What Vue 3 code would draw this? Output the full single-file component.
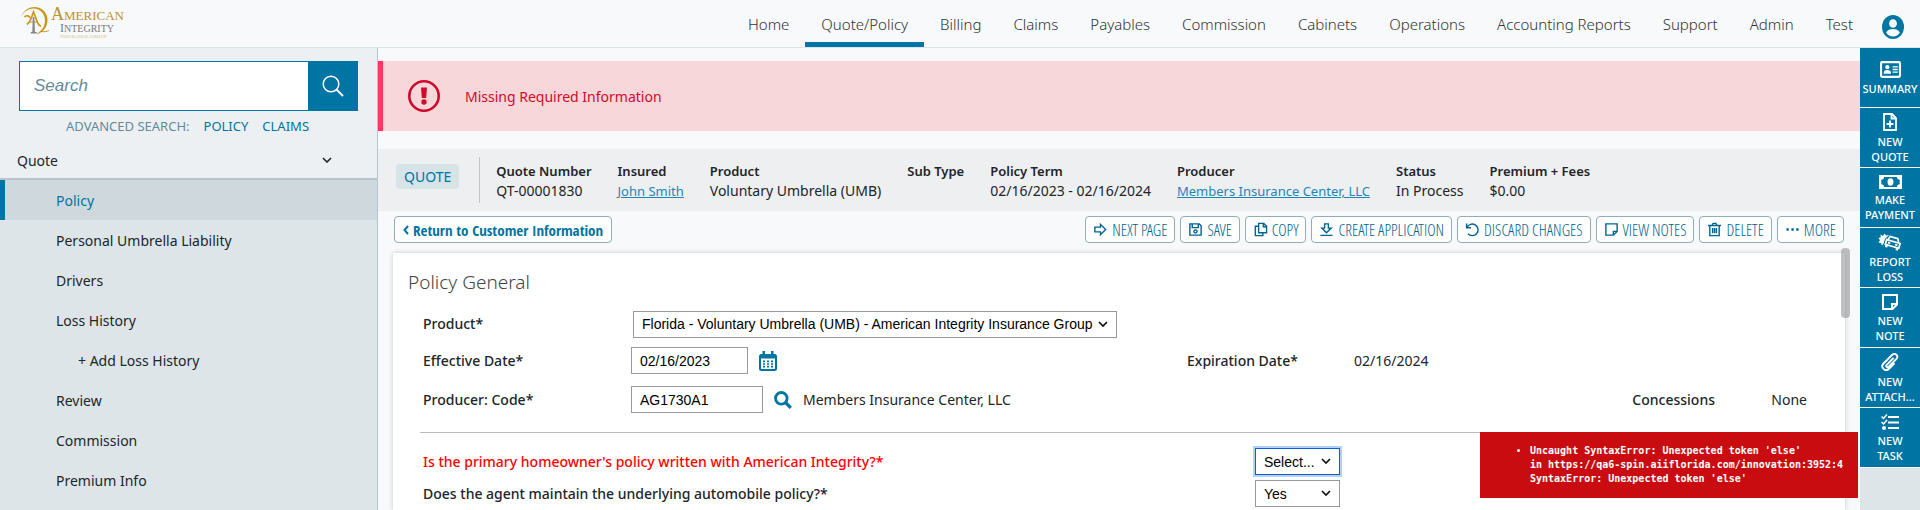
<script setup>
import { ref } from 'vue'

const navItems = ['Home', 'Quote/Policy', 'Billing', 'Claims', 'Payables', 'Commission', 'Cabinets', 'Operations', 'Accounting Reports', 'Support', 'Admin', 'Test']
const activeNav = 'Quote/Policy'

const sideItems = [
  { label: 'Policy', active: true },
  { label: 'Personal Umbrella Liability' },
  { label: 'Drivers' },
  { label: 'Loss History' },
  { label: '+ Add Loss History', nested: true },
  { label: 'Review' },
  { label: 'Commission' },
  { label: 'Premium Info' },
]

const facts = [
  { name: 'Quote Number', value: 'QT-00001830' },
  { name: 'Insured', value: 'John Smith', link: true },
  { name: 'Product', value: 'Voluntary Umbrella (UMB)' },
  { name: 'Sub Type', value: '' },
  { name: 'Policy Term', value: '02/16/2023 - 02/16/2024' },
  { name: 'Producer', value: 'Members Insurance Center, LLC', link: true },
  { name: 'Status', value: 'In Process' },
  { name: 'Premium + Fees', value: '$0.00' },
]

const actions = [
  { label: 'NEXT PAGE', icon: 'M2 5.500h6v-3l5.500 5.500-5.500 5.500v-3H2z' },
  { label: 'SAVE', icon: 'M2 2h10l2 2v10H2zM4.500 2v4h6.500V2M8 8.400a1.700 1.700 0 1 0 .01 0z' },
  { label: 'COPY', icon: 'M6 1.500h5.500l3 3v7H6zM11 1.500v3.500h3.500M6 4.500H2.500v10h8v-3' },
  { label: 'CREATE APPLICATION', icon: 'M6 2h4v4.500h3L8 11.500 3 6.500h3zM1.500 14.300h13' },
  { label: 'DISCARD CHANGES', icon: 'M1.700 1.500v4.700h4.700M2 6a6.200 6.200 0 1 1 1.200 6.600' },
  { label: 'VIEW NOTES', icon: 'M2 2h12v8l-4 4H2zM14 10h-4v4' },
  { label: 'DELETE', icon: 'M1 3.700h14M5.500 3.500l1-2h3l1 2M3 4v10.500h10V4M6 6.500v5.500M8 6.500v5.500M10 6.500v5.500' },
  { label: 'MORE', icon: 'M1.500 8h2.500M6.800 8h2.500M12 8h2.500', dots: true },
]

const tools = [
  { lines: ['SUMMARY'], icon: 'card' },
  { lines: ['NEW', 'QUOTE'], icon: 'file' },
  { lines: ['MAKE', 'PAYMENT'], icon: 'money' },
  { lines: ['REPORT', 'LOSS'], icon: 'car' },
  { lines: ['NEW', 'NOTE'], icon: 'note' },
  { lines: ['NEW', 'ATTACH...'], icon: 'clip' },
  { lines: ['NEW', 'TASK'], icon: 'task' },
]

const search = ref('')
const effectiveDate = ref('02/16/2023')
const producerCode = ref('AG1730A1')
</script>

<template>
  <div class="app">
    <header class="top">
      <a class="logo" href="#" aria-label="American Integrity Insurance Group">
        <svg class="emblem" width="30" height="30" viewBox="0 0 30 30" fill="none">
          <path d="M.8 12C2.500 5.500 8 1 14.500 1 22 1 28 7 27.500 15c-.5 7-5 12-11.500 13.300C21.500 25 25 20.500 25 14.500 25 7.500 20 2.500 13.500 2.500 8 2.500 3 6 .8 12z" fill="#c9971c" />
          <path d="M4.500 11c2.500-2 4.500-1.500 5.500 1M7 18.500c2-1.500 3.500-4 4.500-7L13.500 6l4.500 11.500c1 2 2 2.500 3 2.800" stroke="#c9971c" stroke-width="1.700" />
          <path d="M9 16h8M21 25.500c3 .4 5.500.2 8-1" stroke="#c9971c" />
          <path d="M12.800 11h1.600l.5 15h1.800v1.600h-6V26h1.600z" fill="#85868d" />
        </svg>
        <span class="brand">
          <span class="brand-a"><b>A</b>MERICAN</span>
          <span class="brand-b"><b>I</b>NTEGRITY</span>
          <span class="brand-c">INSURANCE GROUP</span>
        </span>
      </a>
      <nav class="nav">
        <a v-for="n in navItems" :key="n" href="#" :class="{ on: n === activeNav }">{{ n }}</a>
      </nav>
      <button class="user" aria-label="User account">
        <svg width="22" height="24" viewBox="0 0 24 24" preserveAspectRatio="none">
          <circle cx="12" cy="12" r="12" fill="#0074a2" />
          <circle cx="12" cy="8.500" r="4.300" fill="#f7f9fa" />
          <path d="M4.500 17.500c1.500-2.500 4-3.500 7.500-3.500s6 1 7.500 3.500c-1.500 2.500-4.300 4-7.500 4s-6-1.500-7.500-4z" fill="#f7f9fa" />
        </svg>
      </button>
    </header>

    <div class="body">
      <aside class="side">
        <form class="search" @submit.prevent>
          <input v-model="search" type="text" placeholder="Search" aria-label="Search" />
          <button aria-label="Run search">
            <svg width="22" height="22" viewBox="0 0 22 22" fill="none" stroke="#fff" stroke-width="1.500">
              <circle cx="9" cy="9" r="7.800" /><path d="M14.500 14.500l6.500 6.500" stroke-width="2" />
            </svg>
          </button>
        </form>
        <div class="advanced">
          <span>ADVANCED SEARCH:</span><a href="#">POLICY</a><a href="#">CLAIMS</a>
        </div>
        <button class="group">
          Quote
          <svg width="10" height="6" viewBox="0 0 10 6" fill="none" stroke="#222" stroke-width="1.600"><path d="M1 1l4 4 4-4" /></svg>
        </button>
        <nav class="tree">
          <a v-for="s in sideItems" :key="s.label" href="#" :class="{ on: s.active, nested: s.nested }">{{ s.label }}</a>
        </nav>
      </aside>

      <main class="main">
        <div class="alert" role="alert">
          <svg width="32" height="32" viewBox="0 0 32 32">
            <circle cx="16" cy="16" r="14.700" fill="none" stroke="#cf0a2c" stroke-width="2.600" />
            <path d="M13 7.500h6l-.8 10.500h-4.400z" fill="#cf0a2c" /><circle cx="16" cy="22" r="2.700" fill="#cf0a2c" />
          </svg>
          <span>Missing Required Information</span>
        </div>

        <section class="facts">
          <span class="badge">QUOTE</span>
          <dl>
            <div v-for="f in facts" :key="f.name">
              <dt>{{ f.name }}</dt>
              <dd><a v-if="f.link" href="#">{{ f.value }}</a><template v-else>{{ f.value }}</template></dd>
            </div>
          </dl>
        </section>

        <div class="toolbar">
          <button class="btn back">
            <svg width="6" height="10" viewBox="0 0 6 10" fill="none" stroke="currentColor" stroke-width="2"><path d="M5 1L1.500 5 5 9" /></svg>
            Return to Customer Information
          </button>
          <div class="actions">
            <button v-for="a in actions" :key="a.label" class="btn">
              <svg width="15" height="15" viewBox="0 0 16 16" fill="none" stroke="currentColor" :stroke-width="a.dots ? 2.500 : 1.500"><path :d="a.icon" /></svg>
              {{ a.label }}
            </button>
          </div>
        </div>

        <section class="card">
          <h1>Policy General</h1>
          <div class="row">
            <label for="product">Product*</label>
            <span class="select wide">
              <select id="product"><option>Florida - Voluntary Umbrella (UMB) - American Integrity Insurance Group</option></select>
              <svg width="10" height="7" viewBox="0 0 10 7" fill="none" stroke="#111" stroke-width="1.700"><path d="M1 1l4 4 4-4" /></svg>
            </span>
          </div>
          <div class="row dates">
            <label for="effective">Effective Date*</label>
            <div class="field">
              <input id="effective" v-model="effectiveDate" class="date" type="text" />
              <button class="icon" aria-label="Pick date">
                <svg width="18" height="20" viewBox="0 0 18 20" fill="none">
                  <rect x="1" y="4" width="16" height="15" rx="1.500" stroke="#0074a2" stroke-width="2" />
                  <path d="M1 3.500h16v4H1zM3.500 0h2.500v4H3.500zM12 0h2.500v4H12z" fill="#0074a2" />
                  <path d="M4 10.300h10M4 13h10M4 15.700h10" stroke="#0074a2" stroke-width="1.700" stroke-dasharray="2 2" />
                </svg>
              </button>
            </div>
            <div class="pair"><span class="name">Expiration Date*</span><span>02/16/2024</span></div>
          </div>
          <div class="row">
            <label for="producer">Producer: Code*</label>
            <div class="field">
              <input id="producer" v-model="producerCode" class="code" type="text" />
              <button class="icon" aria-label="Look up producer">
                <svg width="18" height="18" viewBox="0 0 18 18" fill="none" stroke="#0074a2">
                  <circle cx="7.300" cy="7.300" r="5.800" stroke-width="2.800" /><path d="M11.500 11.500l5.300 5.300" stroke-width="3.200" />
                </svg>
              </button>
              <span>Members Insurance Center, LLC</span>
            </div>
            <div class="pair concessions"><span class="name">Concessions</span><span>None</span></div>
          </div>
          <hr />
          <div class="question missing">
            <label for="q1">Is the primary homeowner's policy written with American Integrity?*</label>
            <span class="select focus">
              <select id="q1"><option>Select...</option><option>Yes</option><option>No</option></select>
              <svg width="10" height="7" viewBox="0 0 10 7" fill="none" stroke="#111" stroke-width="1.700"><path d="M1 1l4 4 4-4" /></svg>
            </span>
          </div>
          <div class="question">
            <label for="q2">Does the agent maintain the underlying automobile policy?*</label>
            <span class="select">
              <select id="q2"><option>Yes</option><option>No</option></select>
              <svg width="10" height="7" viewBox="0 0 10 7" fill="none" stroke="#111" stroke-width="1.700"><path d="M1 1l4 4 4-4" /></svg>
            </span>
          </div>
          <span class="thumb"></span>
        </section>
      </main>

      <aside class="rail">
        <button v-for="t in tools" :key="t.icon">
          <svg v-if="t.icon === 'card'" width="21" height="17" viewBox="0 0 20 16" fill="none" stroke="#fff">
            <rect x="1" y="1" width="18" height="14" rx="1" stroke-width="2" />
            <path d="M12 5.500h5M12 8h5M12 10.500h5" stroke-width="1.300" />
            <circle cx="7" cy="5.800" r="2" fill="#fff" stroke="none" /><path d="M3.500 12c0-2.500 1-3.500 3.500-3.500s3.500 1 3.500 3.500z" fill="#fff" stroke="none" />
          </svg>
          <svg v-else-if="t.icon === 'file'" width="14" height="18" viewBox="0 0 14 18" fill="none" stroke="#fff" stroke-width="2">
            <path d="M1 1h8l4 4v12H1zM8.500 1v4.500H13M7 7.500v7M3.500 11h7" stroke-width="1.800" />
          </svg>
          <svg v-else-if="t.icon === 'money'" width="23" height="14" viewBox="0 0 23 14">
            <path fill-rule="evenodd" d="M0 0h23v14H0zM5 2c0 1.700-1 2.700-2.700 2.700v4.600C4 9.300 5 10.300 5 12h13c0-1.700 1-2.700 2.700-2.700V4.700C19 4.700 18 3.700 18 2z" fill="#fff" />
            <ellipse cx="11.500" cy="7" rx="3" ry="3.700" fill="#fff" />
          </svg>
          <svg v-else-if="t.icon === 'car'" width="24" height="18" viewBox="0 0 24 18">
            <path d="M2.500 1.500L5 3l1.500-2.500 1.700 2 2.800-.5-4 4-1.500 4.500-1.500 2-1-2.500-2.500-.5L2 7.200.5 5l2.300-.7z" fill="#fff" />
            <g transform="rotate(16 15 10)" fill="none" stroke="#fff" stroke-width="1.700">
              <path d="M9 8.500l1.500-4h8l2 4" /><path d="M8 8.500h14v5H8z" /><path d="M9.500 13.500V16M20.500 13.500V16" stroke-width="2.500" /><path d="M10 11h2.500M17.500 11H20" />
            </g>
          </svg>
          <svg v-else-if="t.icon === 'note'" width="16" height="16" viewBox="0 0 16 16" fill="none" stroke="#fff" stroke-width="2">
            <path d="M1 1h14v9.500L10.500 15H1zM15 10h-5v5" />
          </svg>
          <svg v-else-if="t.icon === 'clip'" width="18" height="18" viewBox="0 0 18 18" fill="none" stroke="#fff" stroke-width="1.900" stroke-linecap="round">
            <path d="M12 5.500L5.500 12c-1 1.400.8 3 2 2l7.700-7.800c3-3.400-1-7-4.200-4.200L2.500 10.500c-3.500 4 1.800 8.700 5.500 5.300l5-5" />
          </svg>
          <svg v-else width="18" height="16" viewBox="0 0 18 16" fill="none" stroke="#fff" stroke-width="2">
            <path d="M7 3h11M7 8.500h11M7 14h11" /><path d="M.5 2.500L2.500 4.500 6 .5M.5 8l2 2L6 6" stroke-width="1.500" /><circle cx="3" cy="14" r="1" />
          </svg>
          <span v-for="l in t.lines" :key="l">{{ l }}</span>
        </button>
      </aside>
    </div>

    <div class="toast">
      <ul><li>Uncaught SyntaxError: Unexpected token 'else'<br />in https://qa6-spin.aiiflorida.com/innovation:3952:4<br />SyntaxError: Unexpected token 'else'</li></ul>
    </div>
  </div>
</template>

<style>
body { background: #f7f9fa; overflow: hidden; }
</style>

<style scoped>
* { box-sizing: border-box; }
.app { display: flex; flex-direction: column; height: 100vh; font: 14px/20px "Noto Sans", sans-serif; color: #212529; }
button { font: inherit; border: 0; padding: 0; background: none; cursor: pointer; }
a { text-decoration: none; color: #0074a2; }
svg { display: block; flex: none; }

.top { display: flex; height: 48px; flex: none; border-bottom: 1px solid #dbe4e6; padding: 0 16px 0 20px; }
.logo { display: flex; gap: 1px; padding-top: 6px; align-items: flex-start; }
.brand { display: flex; flex-direction: column; font-family: "Liberation Serif", serif; }
.brand b { font-weight: 400; }
.brand-a { font-size: 13px; line-height: 17px; color: #bd9230; }
.brand-a b { font-size: 18px; }
.brand-b { font-size: 10px; line-height: 8px; color: #777981; padding-left: 9px; }
.brand-b b { font-size: 12px; }
.brand-c { font-size: 5px; line-height: 7px; color: #d8bf80; padding-left: 9px; }
.nav { display: flex; margin-left: auto; }
.nav a { padding: 14px 16px 0; height: 47px; font-size: 15px; font-weight: 300; color: #333; border-bottom: 5px solid transparent; }
.nav a.on { border-color: #0074a2; }
.user { margin: 6px 0 0 13px; align-self: center; }

.body { display: flex; flex: 1; min-height: 0; }
.side { width: 378px; flex: none; border-right: 1px solid #b5c5ca; background: #ecf0f3; display: flex; flex-direction: column; }
.search { display: flex; margin: 13px 19px 0; height: 50px; border: 1px solid #0074a2; }
.search input { flex: 1; min-width: 0; border: 0; padding: 0 14px; font: italic 17px "Liberation Sans", sans-serif; outline: 0; background: #fff; }
.search input::placeholder { color: #648a9b; opacity: 1; }
.search button { width: 49px; display: grid; place-items: center; background: #0074a2; }
.advanced { display: flex; justify-content: center; gap: 14px; padding: 5px 2px 0 0; color: #648a9b; font-size: 13px; }
.group { display: flex; align-items: flex-start; justify-content: space-between; padding: 15px 45px 0 17px; height: 44px; border-bottom: 2px solid #b5c5ca; color: #212529; }
.group svg { margin-top: 6px; }
.tree { flex: 1; background: #dde5e8; min-height: 0; }
.side .tree a { display: flex; align-items: center; height: 40px; padding: 1px 0 0 56px; color: #212529; }
.side .tree a.nested { padding-left: 78px; }
.side .tree a.on { background: #cfd9dd; border-left: 5px solid #0074a2; padding-left: 51px; color: #0074a2; }

.main { flex: 1; min-width: 0; display: flex; flex-direction: column; padding-top: 13px; }
.alert { display: flex; align-items: center; gap: 25px; height: 70px; padding-left: 25px; border-left: 5px solid #ff375f; background: #f8d7da; color: #cf0a2c; flex: none; }
.alert span { padding-top: 2px; }
.facts { display: flex; align-items: center; margin-top: 18px; height: 62px; padding-left: 18px; background: #eeeff1; flex: none; }
.badge { margin-bottom: 8px; padding: 2px 8px; line-height: 21px; border-radius: 4px; background: #d6e3e7; color: #0074a2; }
dl { display: flex; gap: 26px; margin: 0 0 0 20px; padding: 4px 0 2px 16px; border-left: 1px solid #c0c5c8; }
dt { font-size: 13px; font-weight: 600; line-height: 20px; }
dd { margin: 0; line-height: 20px; min-height: 20px; white-space: nowrap; }
dd a { color: #1c86b8; font-size: 13px; text-decoration: underline; }
.toolbar { display: flex; justify-content: space-between; padding: 5px 16px 10px; flex: none; }
.actions { display: flex; gap: 5px; }
.btn { display: flex; align-items: center; gap: 4px; height: 27px; padding: 0 7px; border: 1px solid #92adb7; border-radius: 4px; background: #fff; color: #00648f; white-space: nowrap; font-family: "Open Sans Condensed Light", "Liberation Sans Narrow", "Open Sans Condensed", sans-serif; font-size: 16px; }
.btn.back { padding: 0 8px; color: #0074a2; font-family: "Open Sans Condensed", "Liberation Sans Narrow", sans-serif; font-size: 15px; font-weight: 600; }

.card { position: relative; flex: 1; min-height: 0; margin: 0 15px; padding: 17px 24px 0 15px; background: #fff; box-shadow: 0 0 5px rgba(0, 0, 0, 0.2); }
h1 { margin: 0 0 13px; font-size: 19px; line-height: 24px; font-weight: 300; color: #444; }
.row { display: grid; grid-template-columns: 208px minmax(0, 556fr) minmax(0, 634fr); align-items: center; height: 39px; margin-left: 15px; }
.row:first-of-type { height: 34px; }
label, .name { font-weight: 500; }
.row > .select { grid-column: 2 / 4; justify-self: start; margin-left: 2px; }
.field { display: flex; align-items: center; gap: 11px; white-space: nowrap; }
.pair { display: flex; }
.pair .name { width: 167px; }
.concessions { justify-content: flex-end; padding-right: 14px; }
.concessions .name { width: 139px; }
input.date, input.code, select { height: 27px; border: 1px solid #999; border-radius: 0; background: #fff; font: 14px "Liberation Sans", sans-serif; color: #000; padding: 0 8px; outline: 0; }
input.date { width: 117px; }
input.code { width: 132px; }
.select { display: inline-grid; align-items: center; }
.select > * { grid-area: 1 / 1; }
.select svg { justify-self: end; margin-right: 9px; pointer-events: none; }
select { appearance: none; width: 85px; }
.wide select { width: auto; padding-right: 22px; }
.focus select { border-color: #0a5cd6; box-shadow: 0 0 0 2px #b3d1f7; }
hr { margin: 13px -24px 15px 12px; border: 0; border-top: 1px solid #bbb; }
.question { display: grid; grid-template-columns: minmax(0, 832fr) minmax(0, 566fr); align-items: center; margin: 0 0 5px 15px; height: 27px; }
.question label { padding-top: 1px; }
.question .select { justify-self: start; }
.missing { color: #f00; }
.thumb { position: absolute; right: -5px; top: -5px; width: 9px; height: 70px; border-radius: 4px; background: rgba(140, 140, 140, 0.55); }

.rail { width: 60px; flex: none; background: #dde5e8; }
.rail button { display: flex; flex-direction: column; align-items: center; justify-content: center; width: 60px; height: 60px; padding-top: 2px; background: #0074a2; border-bottom: 1px solid #fff; color: #fff; font-size: 11px; font-weight: 500; line-height: 15px; white-space: nowrap; }
.rail svg { margin-bottom: 3px; }

.toast { position: fixed; right: 62px; bottom: 12px; width: 378px; padding: 12px 0; overflow: hidden; background: #c90c0f; color: #fff; font: bold 10px/14px "DejaVu Sans Mono", monospace; white-space: nowrap; }
.toast ul { margin: 0; padding-left: 50px; }
</style>
